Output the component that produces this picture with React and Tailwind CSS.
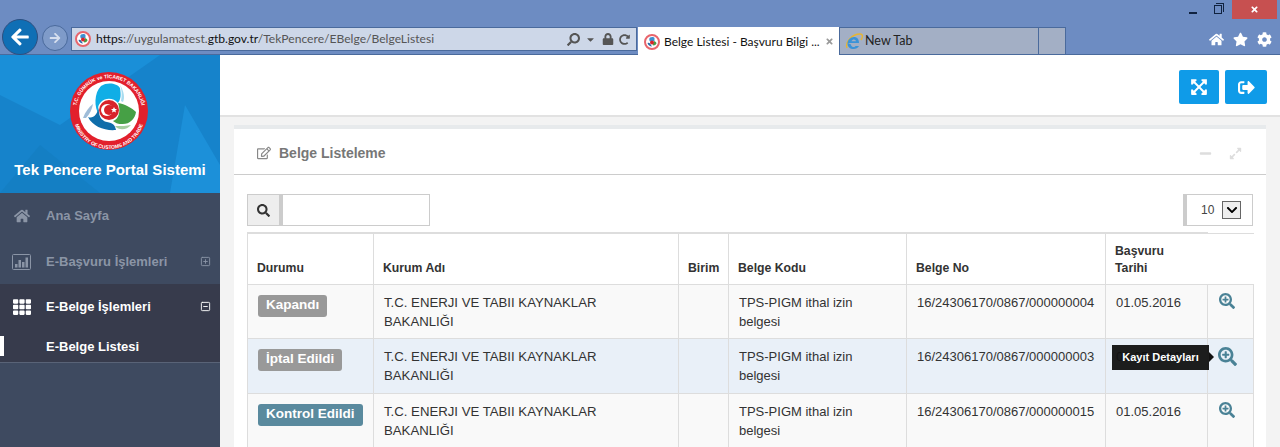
import { FaHome, FaTh, FaSearchPlus, FaExpandArrowsAlt, FaSignOutAlt, FaRegEdit, FaSearch, FaStar, FaCog, FaArrowLeft, FaArrowRight, FaLock, FaRedoAlt, FaMinus, FaExpandAlt, FaCaretDown, FaTimes, FaChevronDown } from 'react-icons/fa';
import { FiPlusSquare, FiMinusSquare } from 'react-icons/fi';

const rows = [
  { status: 'Kapandı', color: 'bg-[#999999]', no: '16/24306170/0867/000000004', bg: 'bg-[#f9f9f9]', h: 'h-[54px]' },
  { status: 'İptal Edildi', color: 'bg-[#999999]', no: '16/24306170/0867/000000003', bg: 'bg-[#e9f0f8]', h: 'h-[55px]', tip: true },
  { status: 'Kontrol Edildi', color: 'bg-[#5a8a9e]', no: '16/24306170/0867/000000015', bg: 'bg-[#f9f9f9]', h: 'h-[54px]' },
];

function SiteIcon() {
  return (
    <svg width="16" height="16" viewBox="0 0 16 16" className="shrink-0">
      <circle cx="8" cy="8" r="7" fill="#fff" stroke="#e8656c" strokeWidth="2" />
      <path d="M6 3.5 C8 2.5 10 3 10.5 4 L10.5 7 L6 7.5 C5 6 5 4.5 6 3.5 Z" fill="#3b8fd0" />
      <path d="M3.5 9 C5 8.5 6 9 7 11 L8 12.5 C6 12.5 4 11 3.5 9 Z" fill="#2a66a8" />
      <path d="M10 7 C11.5 7.5 12.5 8.5 12.5 9.5 C11.5 11.5 9.5 12 8.5 11 Z" fill="#4b9b45" />
      <circle cx="8" cy="8.5" r="2" fill="#d8232a" />
    </svg>
  );
}

function IeIcon() {
  return (
    <svg width="20" height="20" viewBox="0 0 20 20" className="shrink-0">
      <path d="M3 16 C1 10 8 2 16 2 C19 2 19 5 17 8" fill="none" stroke="#e8b52e" strokeWidth="1.4" />
      <path d="M4 11 H15 C15 7 13 5 10 5 C6.5 5 3.5 8 3.5 11.5 C3.5 15 6 17 9.5 17 C12 17 14 16 15 14 H11.5 C11 15 10 15.2 9.2 15 C7.8 14.7 7 13.8 7 12.5 M7.5 9.3 C8 8 9 7.4 10 7.4 C11 7.4 11.9 8.2 12 9.3 Z" fill="#3a93d8" fillRule="evenodd" />
    </svg>
  );
}

function BarsIcon() {
  return (
    <svg width="19" height="16" viewBox="0 0 19 16" className="ml-[12px] shrink-0">
      <rect x="0.5" y="0.5" width="18" height="15" rx="1" fill="none" stroke="currentColor" />
      <rect x="3" y="10" width="2.5" height="3.5" fill="currentColor" />
      <rect x="6.5" y="6" width="2.5" height="7.5" fill="currentColor" />
      <rect x="10" y="8" width="2.5" height="5.5" fill="currentColor" />
      <rect x="13.5" y="3.5" width="2.5" height="10" fill="currentColor" />
    </svg>
  );
}

function Logo() {
  return (
    <svg width="80" height="80" viewBox="0 0 80 80">
      <circle cx="40" cy="40" r="39" fill="#e2202c" />
      <circle cx="40" cy="40" r="30" fill="#fff" />
      <path d="M51 14 C55 20 56 27 54 31 L52 30 C53 24 53 19 51 14 Z" fill="#a8dcf0" />
      <path d="M32 15 C38 11 48 12 51 17 C52 24 52 28 49 32 C45 27 37 26 32 31 C29 34 28 38 30 44 C25 36 25 22 32 15 Z" fill="#10aee6" />
      <path d="M14 47 C16 41 20 36 24 33 C23 38 21 43 17 47 Z" fill="#9fbcd8" />
      <path d="M30 36 C29 44 32 50 38 51 C44 52 46 54 47 59 C36 60 24 56 19 46 C24 48 28 44 30 36 Z" fill="#0f6eaa" />
      <path d="M49 32 C56 33 63 37 67 41 C66 48 60 54 52 53 C48 53 47 52 44 50 C50 48 52 40 49 32 Z" fill="#46a045" />
      <path d="M46 55 C52 55 58 55 62 54 C58 59 50 60 46 55 Z" fill="#a5cf9f" />
      <circle cx="40" cy="39" r="10" fill="#d8232a" />
      <circle cx="38" cy="39" r="6" fill="#fff" />
      <circle cx="40" cy="39" r="5" fill="#d8232a" />
      <path d="M45 36 l1 2 l2 0 l-1.6 1.4 l.6 2.2 l-2 -1.2 l-2 1.2 l.6 -2.2 l-1.6 -1.4 l2 0 Z" fill="#fff" />
      <defs>
        <path id="logoTop" d="M7.5 46 A33 33 0 1 1 72.5 46" />
        <path id="logoBottom" d="M4 42 A36 36 0 0 0 76 42" />
      </defs>
      <text fontSize="5" fontWeight="700" fill="#fff" fontFamily="'Liberation Sans', sans-serif">
        <textPath href="#logoTop" startOffset="50%" textAnchor="middle">T.C. GÜMRÜK ve TİCARET BAKANLIĞI</textPath>
      </text>
      <text fontSize="5" fontWeight="700" fill="#fff" fontFamily="'Liberation Sans', sans-serif">
        <textPath href="#logoBottom" startOffset="50%" textAnchor="middle">MINISTRY OF CUSTOMS AND TRADE</textPath>
      </text>
    </svg>
  );
}

function BrowserBar() {
  return (
    <div className="h-[55px] shrink-0 bg-[#6d8cc2] border-b border-[#4a6a9c] flex flex-col">
      <div className="h-[19px] flex justify-end items-start text-[#10223f]">
        <div className="w-[8px] h-[2px] bg-[#10223f] mt-[12px]" />
        <div className="relative w-[8px] h-[9px] mt-[5px] ml-[17px] border border-[#10223f] bg-[#6d8cc2]">
          <div className="absolute -top-[3px] left-[1px] w-[8px] h-[9px] border border-[#10223f] border-b-0 border-l-0" />
        </div>
        <div className="w-[45px] h-[19px] ml-[10px] mr-[3px] bg-[#c75050] flex items-center justify-center text-white text-[9px]"><FaTimes /></div>
      </div>
      <div className="flex-1 flex items-start pt-[8px]">
        <div className="w-[36px] h-[36px] ml-[2px] -mt-[8px] rounded-full bg-[#0f6fb5] border border-[#2d4f80] flex items-center justify-center text-white text-[20px] shrink-0"><FaArrowLeft /></div>
        <div className="w-[26px] h-[26px] ml-[4px] -mt-[2px] rounded-full bg-[#7f9bc9] border border-[#4a6a9c] flex items-center justify-center text-[#d5deee] text-[12px] shrink-0"><FaArrowRight /></div>
        <div className="w-[566px] h-[24px] ml-[3px] bg-[#cdd7e8] border border-[#4a6a9c] flex items-center pl-[3px] pr-[6px] text-[12.1px] text-[#555] shrink-0 font-['Lato',sans-serif]">
          <SiteIcon />
          <span className="ml-[5px] truncate"><span className="text-[#111]">https</span>://uygulamatest.<span className="text-[#111]">gtb.gov.tr</span>/TekPencere/EBelge/BelgeListesi</span>
          <div className="ml-auto flex items-center gap-[5px] text-[#555]">
            <FaSearch className="text-[13px] -scale-x-100" />
            <FaCaretDown className="text-[11px]" />
            <FaLock className="text-[12px] ml-[1px]" />
            <FaRedoAlt className="text-[11px]" />
          </div>
        </div>
        <div className="w-[202px] h-[28px] ml-[1px] pt-[1px] bg-white flex items-center pl-[6px] pr-[5px] text-[12px] text-[#111] shrink-0 font-['Lato',sans-serif] border-r border-[#4a6a9c]">
          <SiteIcon />
          <span className="ml-[4px] whitespace-nowrap">Belge Listesi - Başvuru Bilgi ...</span>
          <FaTimes className="ml-auto text-[9px] text-[#999]" />
        </div>
        <div className="w-[199px] h-[27px] pt-[1px] bg-[#a3afc5] border-t border-r border-[#4a6a9c] flex items-center pl-[4px] text-[12.5px] text-[#222] shrink-0 font-['Lato',sans-serif]">
          <IeIcon />
          <span className="ml-[1px]">New Tab</span>
        </div>
        <div className="w-[27px] h-[27px] bg-[#a3afc5] border-t border-r border-[#4a6a9c] shrink-0" />
        <div className="ml-auto mr-[8px] mt-[5px] flex items-center gap-[9px] text-white text-[15px]">
          <FaHome />
          <FaStar />
          <FaCog />
        </div>
      </div>
    </div>
  );
}

function Sidebar() {
  return (
    <div className="w-[220px] shrink-0 bg-[#3e4a60] font-['Liberation_Sans',sans-serif] font-bold">
      <div className="relative h-[138px] bg-[#1683cb] overflow-hidden flex flex-col items-center">
        <svg className="absolute inset-0" width="220" height="138" viewBox="0 0 220 138">
          <polygon points="0,0 160,0 60,70 0,40" fill="#1a8fd8" />
          <polygon points="185,50 220,110 220,138 170,138" fill="#1c90d9" />
          <polygon points="0,138 40,90 100,138" fill="#147fc4" />
        </svg>
        <div className="relative mt-[16px] -ml-[2px]"><Logo /></div>
        <div className="relative mt-[9px] text-white text-[15px] leading-[20px] whitespace-nowrap">Tek Pencere Portal Sistemi</div>
      </div>
      <div className="h-[45px] flex items-center text-[#8b95a6] text-[13px]">
        <FaHome className="ml-[14px] w-[16px] text-[16px]" />
        <span className="ml-[16px]">Ana Sayfa</span>
      </div>
      <div className="h-[46px] pt-[1px] flex items-center text-[#8b95a6] text-[13px]">
        <BarsIcon />
        <span className="ml-[15px]">E-Başvuru İşlemleri</span>
        <FiPlusSquare className="ml-auto mr-[9px] text-[11px]" />
      </div>
      <div className="bg-[#373b4c] border-b border-[#596377] h-[79px] text-white text-[13px]">
        <div className="h-[45px] flex items-center">
          <FaTh className="ml-[13px] text-[18px]" />
          <span className="ml-[15px]">E-Belge İşlemleri</span>
          <FiMinusSquare className="ml-auto mr-[9px] text-[11px]" />
        </div>
        <div className="h-[20px] mt-[7px] flex items-center">
          <div className="w-[4px] h-[20px] bg-white" />
          <span className="ml-[42px] pt-[1px]">E-Belge Listesi</span>
        </div>
      </div>
    </div>
  );
}

function Table() {
  const th = 'border-l border-[#dddddd] border-t-2 align-bottom text-left font-bold px-[9px] pb-[7px] leading-[17px]';
  const td = 'border border-[#dddddd] align-top px-[10px] pt-[8px] leading-[19px]';
  return (
    <table className="table-fixed border-collapse w-[1006px] text-[13px] text-[#333]">
      <colgroup>
        <col className="w-[126px]" />
        <col className="w-[305px]" />
        <col className="w-[50px]" />
        <col className="w-[178px]" />
        <col className="w-[199px]" />
        <col className="w-[102px]" />
        <col className="w-[46px]" />
      </colgroup>
      <thead>
        <tr className="h-[51px] text-[12.25px]">
          <th className={th}>Durumu</th>
          <th className={th}>Kurum Adı</th>
          <th className={th}>Birim</th>
          <th className={th}>Belge Kodu</th>
          <th className={th}>Belge No</th>
          <th className={th}>Başvuru Tarihi</th>
          <th className="border-t border-[#dddddd]" />
        </tr>
      </thead>
      <tbody>
        {rows.map((row) => (
          <tr key={row.no} className={`${row.bg} ${row.h}`}>
            <td className={td + ' !pt-[10px]'}>
              <span className={`${row.color} inline-block h-[22px] px-[8px] rounded-[3px] text-white text-[13.5px] font-bold leading-[20px] whitespace-nowrap`}>{row.status}</span>
            </td>
            <td className={td + ' text-[13.2px]'}>T.C. ENERJI VE TABII KAYNAKLAR BAKANLIĞI</td>
            <td className={td} />
            <td className={td}>TPS-PIGM ithal izin belgesi</td>
            <td className={td + ' whitespace-nowrap'}>{row.no}</td>
            <td className={td + ' relative'}>
              01.05.2016
              {row.tip && (
                <div className="absolute left-[6px] top-[6px] w-[97px] h-[25px] bg-[#111111]/95 text-white text-[11px] font-bold flex items-center justify-center whitespace-nowrap">
                  Kayıt Detayları
                  <div className="absolute -right-[5px] top-[7px] w-0 h-0 border-y-[5px] border-y-transparent border-l-[5px] border-l-[#111111]" />
                </div>
              )}
            </td>
            <td className={td + ' !px-[11px] text-[#4a8296]'}>
              <FaSearchPlus className={row.tip ? 'text-[19px] ml-[-1px]' : 'text-[16px]'} />
            </td>
          </tr>
        ))}
      </tbody>
    </table>
  );
}

function Main() {
  return (
    <div className="flex-1 min-w-0 bg-[#f3f3f3] font-['Liberation_Sans',sans-serif]">
      <div className="h-[62px] bg-white border-b-2 border-[#e2e2e2] flex items-center justify-end gap-[6px] pr-[13px] pt-[4px]">
        <div className="w-[40px] h-[34px] rounded-[2px] bg-[#0f9be8] flex items-center justify-center text-white text-[18px]"><FaExpandArrowsAlt /></div>
        <div className="w-[42px] h-[34px] rounded-[2px] bg-[#0f9be8] flex items-center justify-center text-white text-[17px]"><FaSignOutAlt /></div>
      </div>
      <div className="ml-[14px] mr-[14px] mt-[8px] bg-white border-t-4 border-[#e7eaec]">
        <div className="h-[46px] pt-[3px] border-b border-[#cccccc] flex items-center pl-[23px] pr-[24px] text-[#777]">
          <FaRegEdit className="text-[14px] text-[#888]" />
          <span className="ml-[8px] text-[14px] font-bold">Belge Listeleme</span>
          <FaMinus className="ml-auto text-[13px] text-[#ddd]" />
          <FaExpandAlt className="ml-[17px] text-[13px] text-[#ddd]" />
        </div>
        <div className="pl-[13px] pt-[19px]">
          <div className="w-[1006px] flex justify-between">
            <div className="flex h-[32px] w-[183px] border border-[#cccccc]">
              <div className="w-[31px] bg-[#eeeeee] flex items-center justify-center text-[#333] text-[13px]"><FaSearch /></div>
              <div className="flex-1 border-l-4 border-[#cccccc] bg-white" />
            </div>
            <div className="flex items-center h-[32px] w-[70px] border border-[#cccccc] border-l-4 text-[12px] text-[#444]">
              <span className="ml-[14px]">10</span>
              <div className="ml-[8px] w-[19px] h-[18px] border border-[#666] bg-[#eee] flex items-center justify-center text-black text-[12px]"><FaChevronDown /></div>
            </div>
          </div>
          <div className="mt-[6px]"><Table /></div>
        </div>
      </div>
    </div>
  );
}

export default function App() {
  return (
    <div className="w-[1280px] h-[447px] overflow-hidden flex flex-col">
      <BrowserBar />
      <div className="flex flex-1 min-h-0">
        <Sidebar />
        <Main />
      </div>
    </div>
  );
}
